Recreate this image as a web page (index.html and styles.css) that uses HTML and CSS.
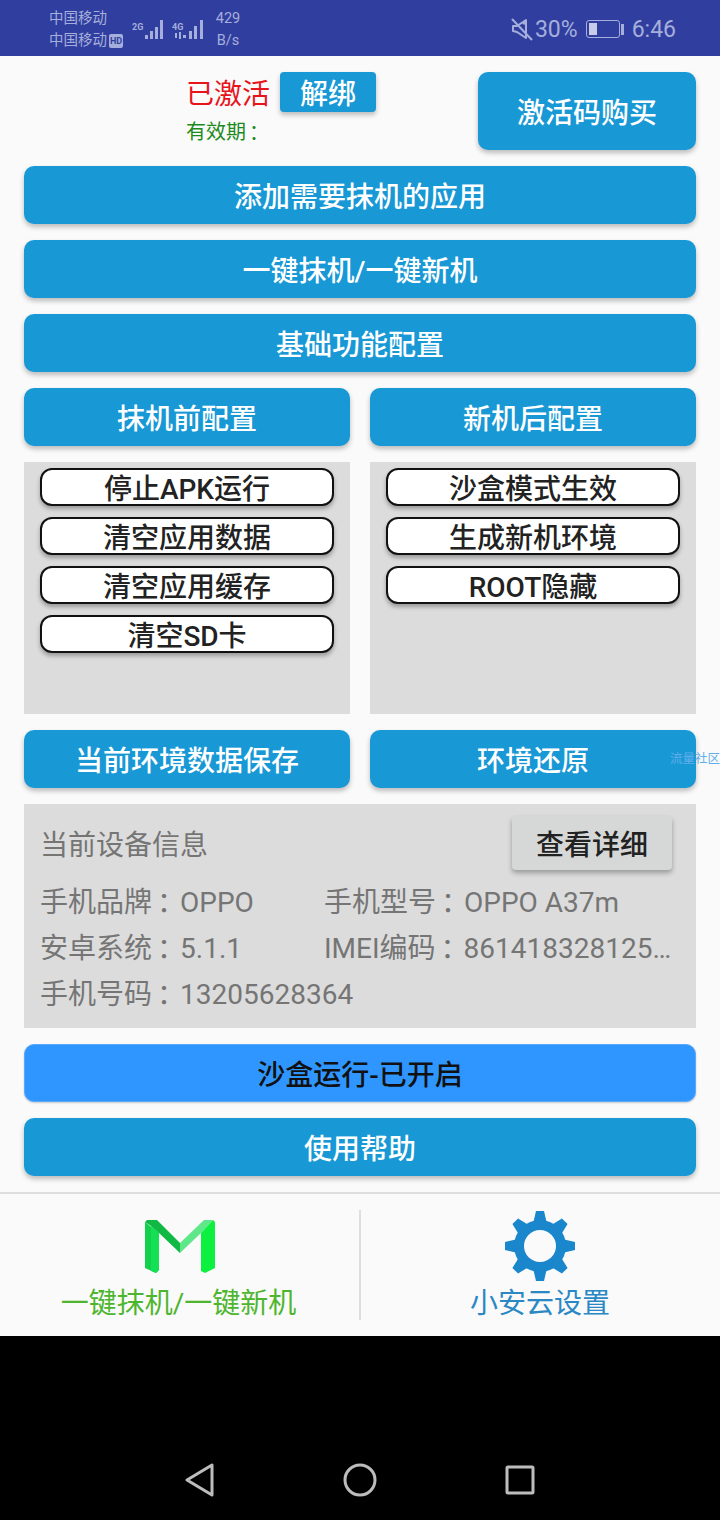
FILE: index.html
```html
<!DOCTYPE html>
<html lang="zh-CN">

<head>
    <meta charset="UTF-8">
    <meta name="viewport" content="width=device-width, initial-scale=1.0">
    <title>一键抹机</title>
    <link rel="stylesheet" href="styles.css">
</head>

<body>
    <div class="statusbar">
        <div class="carriers">
            <div>中国移动</div>
            <div class="carrier-hd">中国移动<span class="hd">HD</span></div>
        </div>
        <div class="signal">
            <span class="net">2G</span>
            <svg width="24" height="22" viewBox="0 0 24 22"><g fill="#a6aedb"><rect x="0" y="17" width="3" height="4"/><rect x="5" y="13" width="3" height="8"/><rect x="10" y="9" width="3" height="12"/><rect x="15" y="2" width="3" height="19"/></g></svg>
        </div>
        <div class="signal signal-4g">
            <span class="net">4G</span>
            <svg width="32" height="22" viewBox="0 0 32 22"><g fill="#a6aedb"><rect x="1" y="15" width="2" height="5"/><rect x="5" y="14" width="2" height="7"/><rect x="9" y="17" width="3" height="3"/><rect x="15" y="13" width="3" height="8"/><rect x="20" y="8" width="3" height="13"/><rect x="26" y="2" width="3" height="19"/></g></svg>
        </div>
        <div class="speed">
            <div>429</div>
            <div>B/s</div>
        </div>
        <div class="status-right">
            <svg width="24" height="24" viewBox="0 0 24 24" fill="none" stroke="#a6aedb" stroke-width="2" stroke-linejoin="round"><path d="M2 9h4l9-6v18l-9-6-4-1z"/><path d="M1 2l20 21"/><path d="M15 4l-3 3" stroke-width="3"/></svg>
            <span class="pct">30%</span>
            <div class="battery"><div class="battery-level"></div></div>
            <div class="battery-tip"></div>
            <span class="clock">6:46</span>
        </div>
    </div>

    <div class="content">
        <div class="activate">
            <div class="activate-info">
                <div class="activate-line">
                    <span class="activated">已激活</span>
                    <button class="btn btn-unbind">解绑</button>
                </div>
                <div class="expire">有效期<span class="colon" lang="zh-TW">：</span></div>
            </div>
            <button class="btn btn-buy">激活码购买</button>
        </div>

        <button class="btn btn-wide">添加需要抹机的应用</button>
        <button class="btn btn-wide">一键抹机/一键新机</button>
        <button class="btn btn-wide">基础功能配置</button>

        <div class="two-col">
            <button class="btn btn-wide">抹机前配置</button>
            <button class="btn btn-wide">新机后配置</button>
        </div>

        <div class="two-col">
            <div class="panel">
                <div class="chip">停止APK运行</div>
                <div class="chip">清空应用数据</div>
                <div class="chip">清空应用缓存</div>
                <div class="chip">清空SD卡</div>
            </div>
            <div class="panel">
                <div class="chip">沙盒模式生效</div>
                <div class="chip">生成新机环境</div>
                <div class="chip">ROOT隐藏</div>
            </div>
        </div>

        <div class="two-col restore-row">
            <button class="btn btn-wide">当前环境数据保存</button>
            <button class="btn btn-wide">环境还原</button>
            <span class="watermark">流量社区</span>
        </div>

        <div class="device">
            <div class="device-head">
                <span>当前设备信息</span>
                <button class="btn-detail">查看详细</button>
            </div>
            <div class="device-grid">
                <div>手机品牌<span class="colon" lang="zh-TW">：</span>OPPO</div>
                <div>手机型号<span class="colon" lang="zh-TW">：</span>OPPO A37m</div>
                <div>安卓系统<span class="colon" lang="zh-TW">：</span>5.1.1</div>
                <div>IMEI编码<span class="colon" lang="zh-TW">：</span>861418328125…</div>
                <div class="span-two">手机号码<span class="colon" lang="zh-TW">：</span>13205628364</div>
            </div>
        </div>

        <button class="btn btn-wide btn-sandbox">沙盒运行-已开启</button>
        <button class="btn btn-wide">使用帮助</button>
    </div>

    <div class="tabs">
        <div class="tab tab-green">
            <svg width="70" height="54" viewBox="0 0 70 54">
                <path d="M0 2V48L11 53 14 50V13z" fill="#12cf4c"/>
                <path d="M6 6l8 7V50L11 53 6 51z" fill="#13e052"/>
                <path d="M35 23L59 0H68L56 13 35 33z" fill="#5fe889"/>
                <path d="M56 13L68 0 70 2V48L60 53 56 51z" fill="#0cf03f"/>
                <path d="M0 2L2 0H12L35 23V33L14 13 6 6z" fill="#0fb944"/>
            </svg>
            <span>一键抹机/一键新机</span>
        </div>
        <div class="tab-line"></div>
        <div class="tab tab-blue">
            <svg width="70" height="70" viewBox="0 0 70 70">
                <g fill="#1a86cc">
                    <path d="M31 0h8l3 13H28z"/>
                    <path d="M31 0h8l3 13H28z" transform="rotate(45 35 35)"/>
                    <path d="M31 0h8l3 13H28z" transform="rotate(90 35 35)"/>
                    <path d="M31 0h8l3 13H28z" transform="rotate(135 35 35)"/>
                    <path d="M31 0h8l3 13H28z" transform="rotate(180 35 35)"/>
                    <path d="M31 0h8l3 13H28z" transform="rotate(225 35 35)"/>
                    <path d="M31 0h8l3 13H28z" transform="rotate(270 35 35)"/>
                    <path d="M31 0h8l3 13H28z" transform="rotate(315 35 35)"/>
                    <circle cx="35" cy="35" r="26"/>
                </g>
                <circle cx="35" cy="35" r="16" fill="#fafafa"/>
            </svg>
            <span>小安云设置</span>
        </div>
    </div>

    <div class="navbar">
        <svg width="30" height="34" viewBox="0 0 30 34" fill="none" stroke="#bdbdbd" stroke-width="3" stroke-linejoin="round"><path d="M27 2v30L2 17z"/></svg>
        <svg width="34" height="34" viewBox="0 0 34 34" fill="none" stroke="#bdbdbd" stroke-width="3"><circle cx="17" cy="17" r="15"/></svg>
        <svg width="30" height="30" viewBox="0 0 30 30" fill="none" stroke="#bdbdbd" stroke-width="3" stroke-linejoin="round"><rect x="2" y="2" width="26" height="26" rx="1"/></svg>
    </div>
</body>

</html>
```

FILE: styles.css
```css
* {
    box-sizing: border-box;
}

body {
    margin: 0;
    width: 720px;
    height: 1520px;
    background-color: #000000;
    font-family: Roboto, "Noto Sans CJK SC", sans-serif;
    overflow: hidden;
}

button {
    font-family: inherit;
    border: 0;
    padding: 0;
}

.colon {
    font-family: "Noto Sans CJK TC", sans-serif;
    line-height: 0;
    vertical-align: -2px;
    margin-left: -2px;
    margin-right: 2px;
}

.statusbar {
    height: 56px;
    background-color: #303f9f;
    color: #a6aedb;
    display: flex;
    align-items: center;
    padding: 0 44px 0 49px;
}

.carriers {
    font-size: 14.5px;
    line-height: 22px;
    width: 83px;
    padding-top: 4px;
}

.carrier-hd {
    display: flex;
    align-items: center;
}

.hd {
    background-color: #a6aedb;
    color: #303f9f;
    font-size: 9px;
    font-weight: bold;
    line-height: 14px;
    height: 14px;
    padding: 0 1px;
    border-radius: 2px;
    margin-left: 2px;
}

.signal {
    display: flex;
    align-items: flex-end;
    height: 24px;
    width: 40px;
}

.signal svg {
    margin-left: 1px;
}

.signal-4g {
    width: 42px;
}

.signal-4g svg {
    margin-left: -10px;
}

.net {
    font-size: 9px;
    font-weight: bold;
    line-height: 22px;
    align-self: flex-start;
    margin-right: 1px;
}

.speed {
    font-size: 14.5px;
    line-height: 22px;
    text-align: center;
    width: 28px;
    padding-top: 4px;
}

.status-right {
    margin-left: auto;
    display: flex;
    align-items: center;
    padding-top: 2px;
}

.pct {
    font-size: 23px;
}

.battery {
    width: 34px;
    height: 18px;
    border: 1px solid #a6aedb;
    border-radius: 3px;
    padding: 2px;
    margin-left: 8px;
}

.battery-level {
    width: 8px;
    height: 100%;
    background-color: #c9cde8;
}

.battery-tip {
    width: 3px;
    height: 11px;
    background-color: #a6aedb;
    margin-left: 1px;
}

.clock {
    font-size: 23px;
    margin-left: 8px;
}

.content {
    height: 1136px;
    background-color: #fafafa;
    padding: 16px 24px;
    display: flex;
    flex-direction: column;
    gap: 16px;
}

.btn {
    background-color: #1898d5;
    color: #ffffff;
    border-radius: 10px;
    box-shadow: 0 3px 5px rgba(0, 0, 0, 0.25);
}

.btn-wide {
    width: 100%;
    height: 58px;
    flex: none;
    font-size: 28px;
    font-weight: 500;
}

.activate {
    height: 78px;
    display: flex;
    justify-content: flex-end;
}

.activate-info {
    width: 190px;
    margin-right: 102px;
}

.activate-line {
    display: flex;
    align-items: center;
    height: 40px;
}

.activated {
    color: #e8141c;
    font-size: 28px;
    width: 94px;
    flex: none;
}

.btn-unbind {
    width: 96px;
    height: 40px;
    flex: none;
    font-size: 28px;
    font-weight: 500;
    border-radius: 4px;
}

.expire {
    color: #1d8a1d;
    font-size: 20px;
    line-height: 26px;
    margin-top: 7px;
}

.btn-buy {
    width: 218px;
    font-size: 28px;
    font-weight: 500;
}

.two-col {
    display: grid;
    grid-template-columns: 326px 326px;
    gap: 20px;
    flex: none;
}

.panel {
    height: 252px;
    background-color: #dcdcdc;
    padding: 6px 16px;
    display: flex;
    flex-direction: column;
    gap: 11px;
}

.chip {
    height: 38px;
    background-color: #ffffff;
    border: 2px solid #111111;
    border-radius: 12px;
    box-shadow: 0 3px 4px rgba(0, 0, 0, 0.3);
    color: #222222;
    font-size: 28px;
    font-weight: 500;
    line-height: 40px;
    text-align: center;
}

.restore-row {
    position: relative;
}

.watermark {
    position: absolute;
    left: 646px;
    top: 21px;
    font-size: 12.5px;
    line-height: 16px;
    color: #62aeea;
    white-space: nowrap;
}

.device {
    height: 224px;
    flex: none;
    background-color: #dcdcdc;
    padding: 12px 16px;
    color: #757575;
    font-size: 28px;
}

.device-head {
    height: 54px;
    display: flex;
    align-items: center;
    justify-content: space-between;
    padding-right: 8px;
}

.btn-detail {
    width: 160px;
    height: 54px;
    background-color: #d6d7d7;
    color: #222222;
    font-size: 28px;
    font-weight: 500;
    border-radius: 4px;
    box-shadow: 0 3px 5px rgba(0, 0, 0, 0.3);
}

.device-grid {
    display: grid;
    grid-template-columns: 284px 350px;
    grid-auto-rows: 46px;
    line-height: 46px;
    margin-top: 10px;
    white-space: nowrap;
}

.span-two {
    grid-column: span 2;
}

.btn-sandbox {
    background-color: #2f96ff;
    border: 1px solid #5aa9fb;
    color: #111111;
    box-shadow: 0 1px 2px rgba(0, 0, 0, 0.2);
}

.tabs {
    height: 144px;
    background-color: #fafafa;
    border-top: 2px solid #dedede;
    display: flex;
    align-items: center;
}

.tab {
    width: 359px;
    height: 142px;
    display: flex;
    flex-direction: column;
    align-items: center;
    font-size: 28px;
}

.tab svg {
    flex: none;
}

.tab-green {
    color: #4db52e;
    padding-top: 26px;
}

.tab-green span {
    margin-top: 7px;
    margin-right: 2px;
}

.tab-blue {
    color: #2a88c4;
    padding: 17px 1px 0 0;
}

.tab-line {
    width: 2px;
    height: 110px;
    background-color: #dedede;
}

.navbar {
    height: 184px;
    background-color: #000000;
    display: grid;
    grid-template-columns: repeat(3, 160px);
    justify-content: center;
    justify-items: center;
    align-items: center;
    padding-top: 104px;
}
```
